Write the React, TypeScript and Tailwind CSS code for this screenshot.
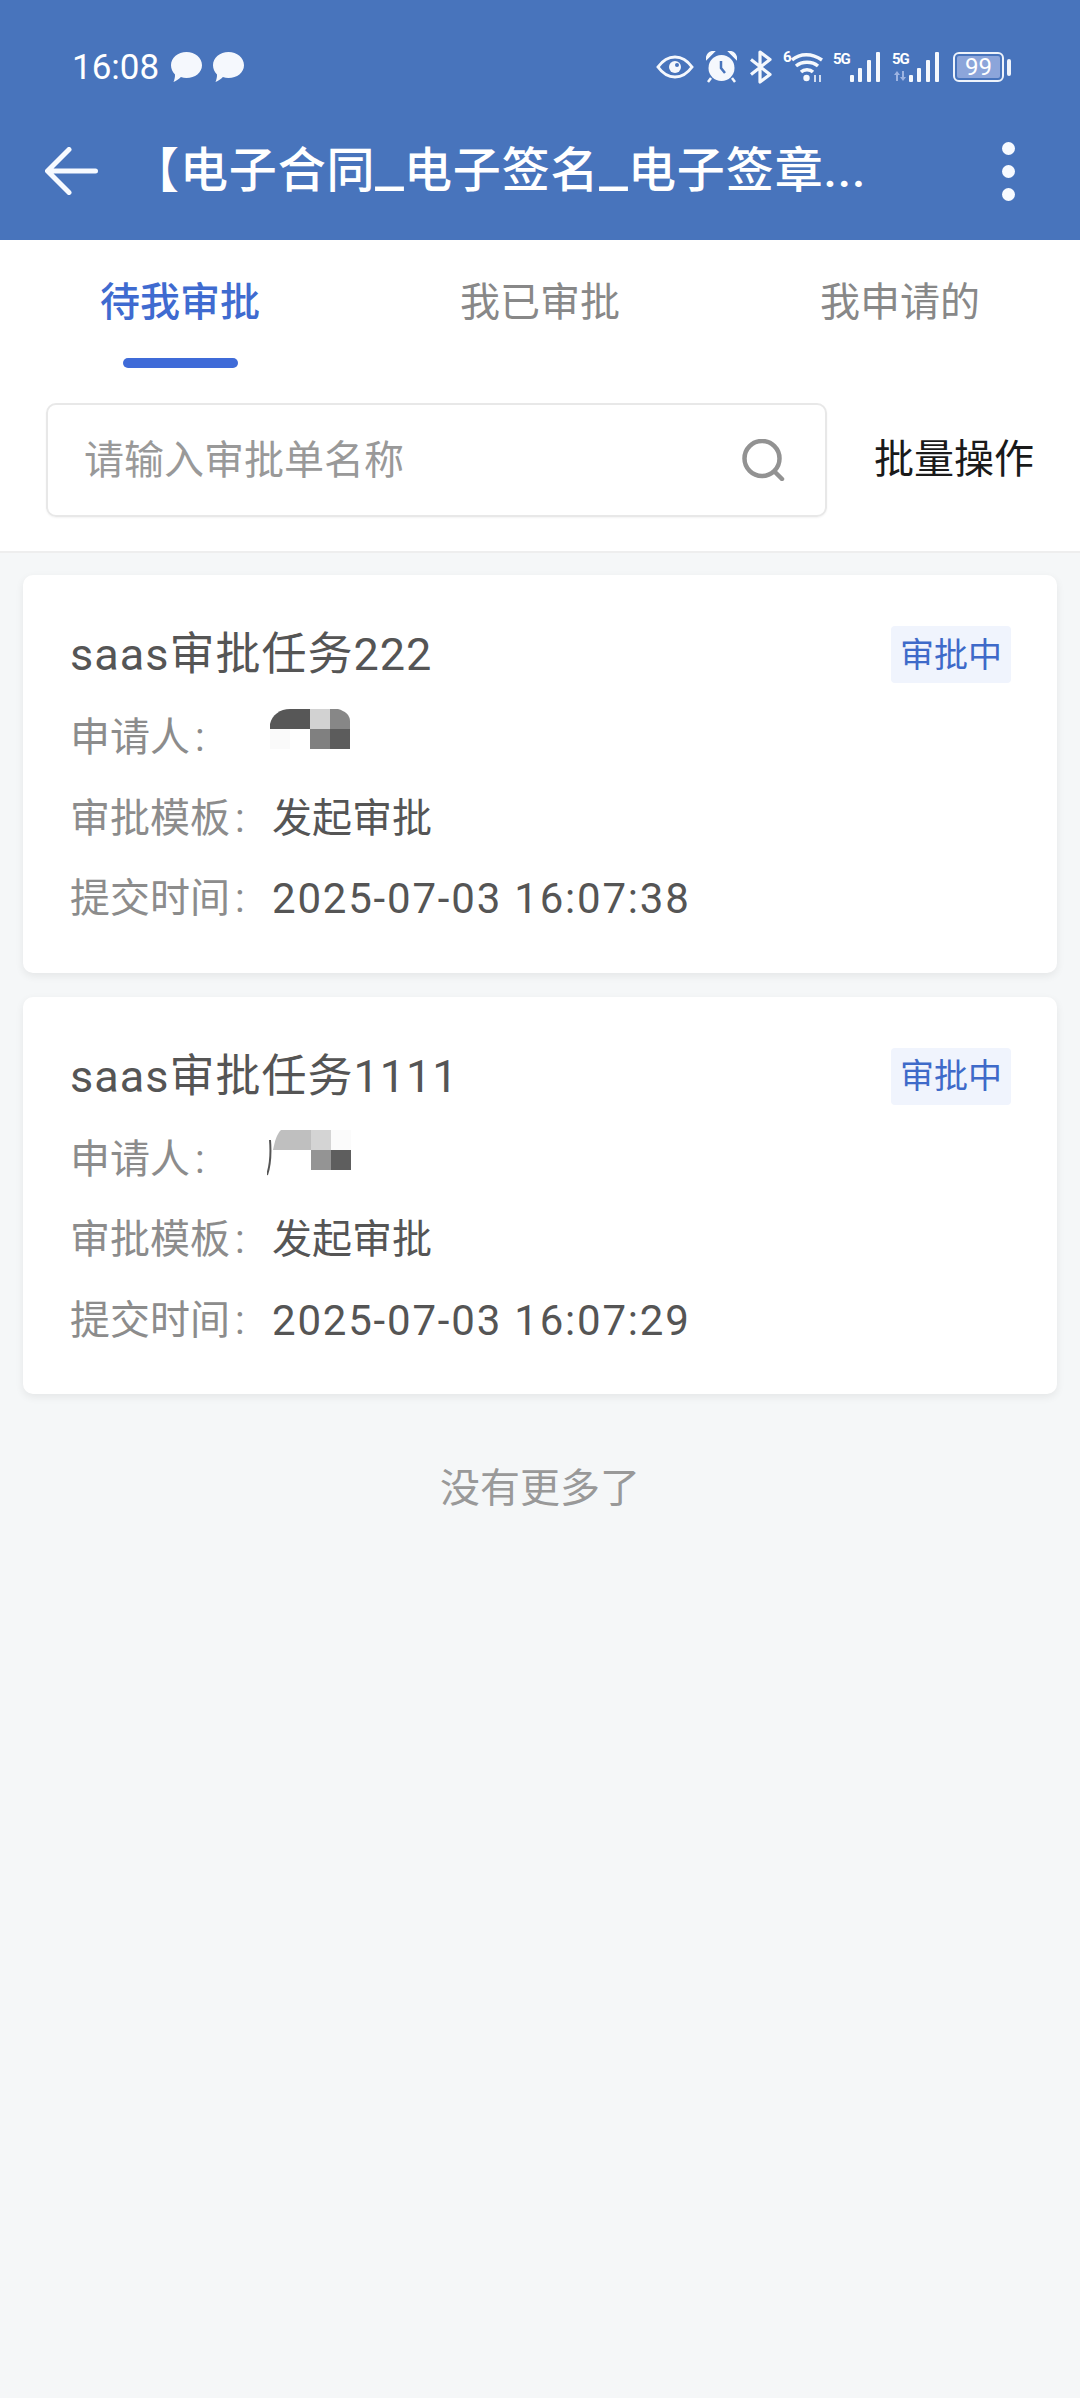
const approvals = [
  {
    id: 1,
    title: "saas审批任务222",
    template: "发起审批",
    submittedAt: "2025-07-03 16:07:38",
  },
  {
    id: 2,
    title: "saas审批任务1111",
    template: "发起审批",
    submittedAt: "2025-07-03 16:07:29",
  },
];

function ChatBubble() {
  return (
    <svg width="31" height="30" viewBox="0 0 31 30" fill="#f5f8fd">
      <path d="M15.5 0C24 0 31 5.8 31 13.2S24 26 15.5 26c-2 0-3.8-.3-5.6-.9C8 27 5.500 28.800 2.500 30c1-2.500 1.600-5 1.500-7.500C1.500 20 0 16.800 0 13.200 0 5.800 7 0 15.500 0Z" />
    </svg>
  );
}

function SignalBars({ faded }: { faded?: boolean }) {
  return (
    <div className="flex items-center">
      <div className="relative h-[30px] w-[16px]">
        <span className="absolute left-0 top-0 text-[15px] leading-[14px] font-bold tracking-[-1px] text-white">5G</span>
        {faded && (
          <svg className="absolute left-[2px] top-[19px]" width="12" height="10" viewBox="0 0 12 10" fill="#9db4e2">
            <path d="M3 0 6 4H4v6H2V4H0ZM9 10 6 6h2V0h2v6h2Z" />
          </svg>
        )}
      </div>
      <svg width="33" height="30" viewBox="0 0 33 30" fill="#f5f8fd">
        <rect x="1" y="23" width="4" height="7" rx="1" />
        <rect x="9" y="16" width="4" height="14" rx="1" />
        <rect x="18" y="8" width="4" height="22" rx="1" />
        <rect x="27" y="0" width="4" height="30" rx="1" />
      </svg>
    </div>
  );
}

function StatusBar() {
  return (
    <div className="flex h-[134px] items-center justify-between pl-[72px] pr-[69px] text-white">
      <div className="flex items-center">
        <span className="mr-[12px] text-[35px] leading-none">16:08</span>
        <ChatBubble />
        <span className="w-[11px]" />
        <ChatBubble />
      </div>
      <div className="flex items-center">
        {/* eye */}
        <svg width="38" height="24" viewBox="0 0 38 24" fill="none" stroke="#f5f8fd" strokeWidth="3">
          <path d="M2 12C7 5 12.500 2 19 2s12 3 17 10c-5 7-10.500 10-17 10S7 19 2 12Z" />
          <circle cx="19" cy="12" r="6" fill="#f5f8fd" stroke="none" />
          <circle cx="21" cy="10" r="2" fill="#4874bc" stroke="none" />
        </svg>
        {/* alarm clock */}
        <svg className="ml-[12px]" width="31" height="32" viewBox="0 0 31 32" fill="#f5f8fd">
          <circle cx="15.500" cy="17" r="13" />
          <path d="M1 7c.5-3 3-5.500 6-6L1 7ZM30 7c-.5-3-3-5.500-6-6l6 6Z" stroke="#f5f8fd" strokeWidth="2.500" />
          <path d="M5 27 2 31M26 27l3 4" stroke="#f5f8fd" strokeWidth="2.500" />
          <path d="M15 10v7l4 5" fill="none" stroke="#4874bc" strokeWidth="2.500" />
        </svg>
        {/* bluetooth */}
        <svg className="ml-[12px]" width="24" height="34" viewBox="0 0 24 34" fill="none" stroke="#f5f8fd" strokeWidth="3.200">
          <path d="M2 9.500 21 24.500 11 32V2l10 7.500L2 24.500" strokeLinejoin="round" />
        </svg>
        {/* wifi 6 */}
        <div className="relative ml-[10px] h-[34px] w-[40px]">
          <span className="absolute left-0 top-0 text-[15px] leading-[14px] font-bold text-white">6</span>
          <svg className="absolute left-[8px] top-[1px]" width="32" height="32" viewBox="0 0 32 32" fill="none" stroke="#f5f8fd" strokeWidth="3.400">
            <path d="M1 9c8-7 20-7 30 0M5 15c6-5 16-5 22 0M10 21c3-3 9-3 12 0" />
            <circle cx="15.500" cy="27" r="3.200" fill="#f5f8fd" stroke="none" />
            <path d="M24 24v7M29 24v7" strokeWidth="1.600" />
          </svg>
        </div>
        <div className="ml-[10px]">
          <SignalBars />
        </div>
        <div className="ml-[10px]">
          <SignalBars faded />
        </div>
        {/* battery */}
        <div className="ml-[12px] flex items-center">
          <div className="flex h-[30px] w-[51px] items-center rounded-[6px] border-[2.500px] border-[#eef3fb] p-[2px]">
            <div className="flex h-full w-full items-center justify-center rounded-[2px] bg-[#8ca5da] text-[24px] leading-none text-white">
              99
            </div>
          </div>
          <span className="ml-[3px] h-[17px] w-[4px] rounded-[2px] bg-[#eef3fb]" />
        </div>
      </div>
    </div>
  );
}

function NavBar() {
  return (
    <div className="flex h-[74px] items-center pl-[45px] pr-[65px] text-white">
      <svg width="53" height="48" viewBox="0 0 53 48" fill="none" stroke="#f7faff" strokeWidth="5" strokeLinecap="round" strokeLinejoin="round">
        <path d="M50.500 24H3M24 2.500 2.500 24 24 45.500" />
      </svg>
      <h1 className="ml-[33px] flex-1 text-[48px] leading-none font-medium tracking-[0.9px] whitespace-nowrap">
        【电子合同<span className="mx-[3px] inline-block scale-x-[1.35]">_</span>电子签名<span className="mx-[3px] inline-block scale-x-[1.35]">_</span>电子签章...
      </h1>
      <div className="flex flex-col gap-[10px]">
        <span className="size-[13px] rounded-full bg-[#f7faff]" />
        <span className="size-[13px] rounded-full bg-[#f7faff]" />
        <span className="size-[13px] rounded-full bg-[#f7faff]" />
      </div>
    </div>
  );
}

function Tabs() {
  return (
    <div className="grid h-[128px] grid-cols-3">
      <div className="flex flex-col items-center">
        <span className="mt-[33px] text-[40px] leading-[60px] font-medium text-[#3f6bd0]">待我审批</span>
        <span className="mt-[25px] h-[10px] w-[115px] rounded-full bg-[#3f6bd8]" />
      </div>
      <div className="flex flex-col items-center">
        <span className="mt-[33px] text-[40px] leading-[60px] text-[#888888]">我已审批</span>
      </div>
      <div className="flex flex-col items-center">
        <span className="mt-[33px] text-[40px] leading-[60px] text-[#888888]">我申请的</span>
      </div>
    </div>
  );
}

function SearchRow() {
  return (
    <div className="flex items-center border-b-2 border-[#eeeeee] pt-[35px] pb-[34px] pl-[46px]">
      <div className="flex h-[114px] w-[781px] items-center rounded-[10px] border-2 border-[#e8e8e8] pl-[36px] pr-[39px] shadow-[0_1px_2px_rgba(0,0,0,0.05)]">
        <input
          placeholder="请输入审批单名称"
          className="min-w-0 flex-1 text-[40px] leading-none text-[#333] outline-none placeholder:text-[#999999]"
        />
        <svg width="44" height="42" viewBox="0 0 44 42" fill="none" stroke="#929292" strokeWidth="4.500" strokeLinecap="round">
          <circle cx="20" cy="19.500" r="17.500" />
          <path d="M33 33l7 7" />
        </svg>
      </div>
      <span className="ml-[47px] text-[40px] leading-none text-[#1a1a1a]">批量操作</span>
    </div>
  );
}

// Blurred-out applicant names: small mosaic blocks
function MosaicA() {
  return (
    <svg width="80" height="40" viewBox="0 0 80 40" shapeRendering="crispEdges">
      <path d="M0 20v-5C2 6 10 0 20 0h20v20Z" fill="#575757" shapeRendering="auto" />
      <rect x="40" width="20" height="20" fill="#d2d2d2" />
      <path d="M60 0h8c7 2 12 6 12 12v8H60Z" fill="#878787" shapeRendering="auto" />
      <rect y="20" width="20" height="20" fill="#fafafa" />
      <rect x="40" y="20" width="20" height="20" fill="#808080" />
      <rect x="60" y="20" width="20" height="20" fill="#5c5c5c" />
    </svg>
  );
}

function MosaicB() {
  return (
    <svg width="84" height="46" viewBox="0 0 84 46">
      <path d="M6 20C8 10 10 4 14 0h30v20Z" fill="#bfbfbf" />
      <rect x="44" width="20" height="20" fill="#d4d4d4" />
      <rect x="64" width="20" height="20" fill="#fbfbfb" />
      <rect x="44" y="20" width="20" height="20" fill="#949494" />
      <rect x="64" y="20" width="20" height="20" fill="#5e5e5e" />
      <path d="M3 10C4 22 3 36 0 45" fill="none" stroke="#555555" strokeWidth="2" />
    </svg>
  );
}

function InfoRow({ label, children }: { label: string; children: React.ReactNode }) {
  return (
    <div className="flex h-[80.500px] items-center text-[40px] leading-none">
      <span className="w-[202px] shrink-0 text-[#8c8c8c]">
        {label}
        <span className="ml-[5px]">:</span>
      </span>
      {children}
    </div>
  );
}

function ApprovalCard({ title, template, submittedAt, mosaic }: { title: string; template: string; submittedAt: string; mosaic: React.ReactNode }) {
  return (
    <div className="rounded-[10px] bg-white pt-[51px] pr-[46px] pb-[33px] pl-[47px] shadow-[0_3px_8px_rgba(0,0,0,0.07)]">
      <div className="flex h-[57px] items-center justify-between">
        <span className="text-[45px] leading-none tracking-[1px] text-[#555555]">{title}</span>
        <span className="flex h-[57px] w-[120px] items-center justify-center rounded-[4px] bg-[#f0f4fd] text-[34px] leading-none text-[#3e6ac9]">
          审批中
        </span>
      </div>
      <div className="mt-[15px]">
        <InfoRow label="申请人">{mosaic}</InfoRow>
        <InfoRow label="审批模板">
          <span className="text-[#555555]">{template}</span>
        </InfoRow>
        <InfoRow label="提交时间">
          <span className="text-[42px] tracking-[1.800px] text-[#555555]">{submittedAt}</span>
        </InfoRow>
      </div>
    </div>
  );
}

export default function App() {
  return (
    <div className="min-h-[2398px] bg-[#f5f7f8] font-['Roboto','Noto_Sans_CJK_SC',sans-serif]">
      <header className="h-[240px] bg-[#4874bc]">
        <StatusBar />
        <NavBar />
      </header>
      <section className="bg-white">
        <Tabs />
        <SearchRow />
      </section>
      <main className="flex flex-col gap-[24px] px-[23px] pt-[22px]">
        {approvals.map((item) => (
          <ApprovalCard
            key={item.id}
            title={item.title}
            template={item.template}
            submittedAt={item.submittedAt}
            mosaic={
              item.id === 1 ? (
                <span className="mb-[18px] -ml-[2px]">
                  <MosaicA />
                </span>
              ) : (
                <span className="mb-[14px] -ml-[5px]">
                  <MosaicB />
                </span>
              )
            }
          />
        ))}
      </main>
      <p className="mt-[65px] text-center text-[40px] leading-[60px] text-[#999999]">没有更多了</p>
    </div>
  );
}
